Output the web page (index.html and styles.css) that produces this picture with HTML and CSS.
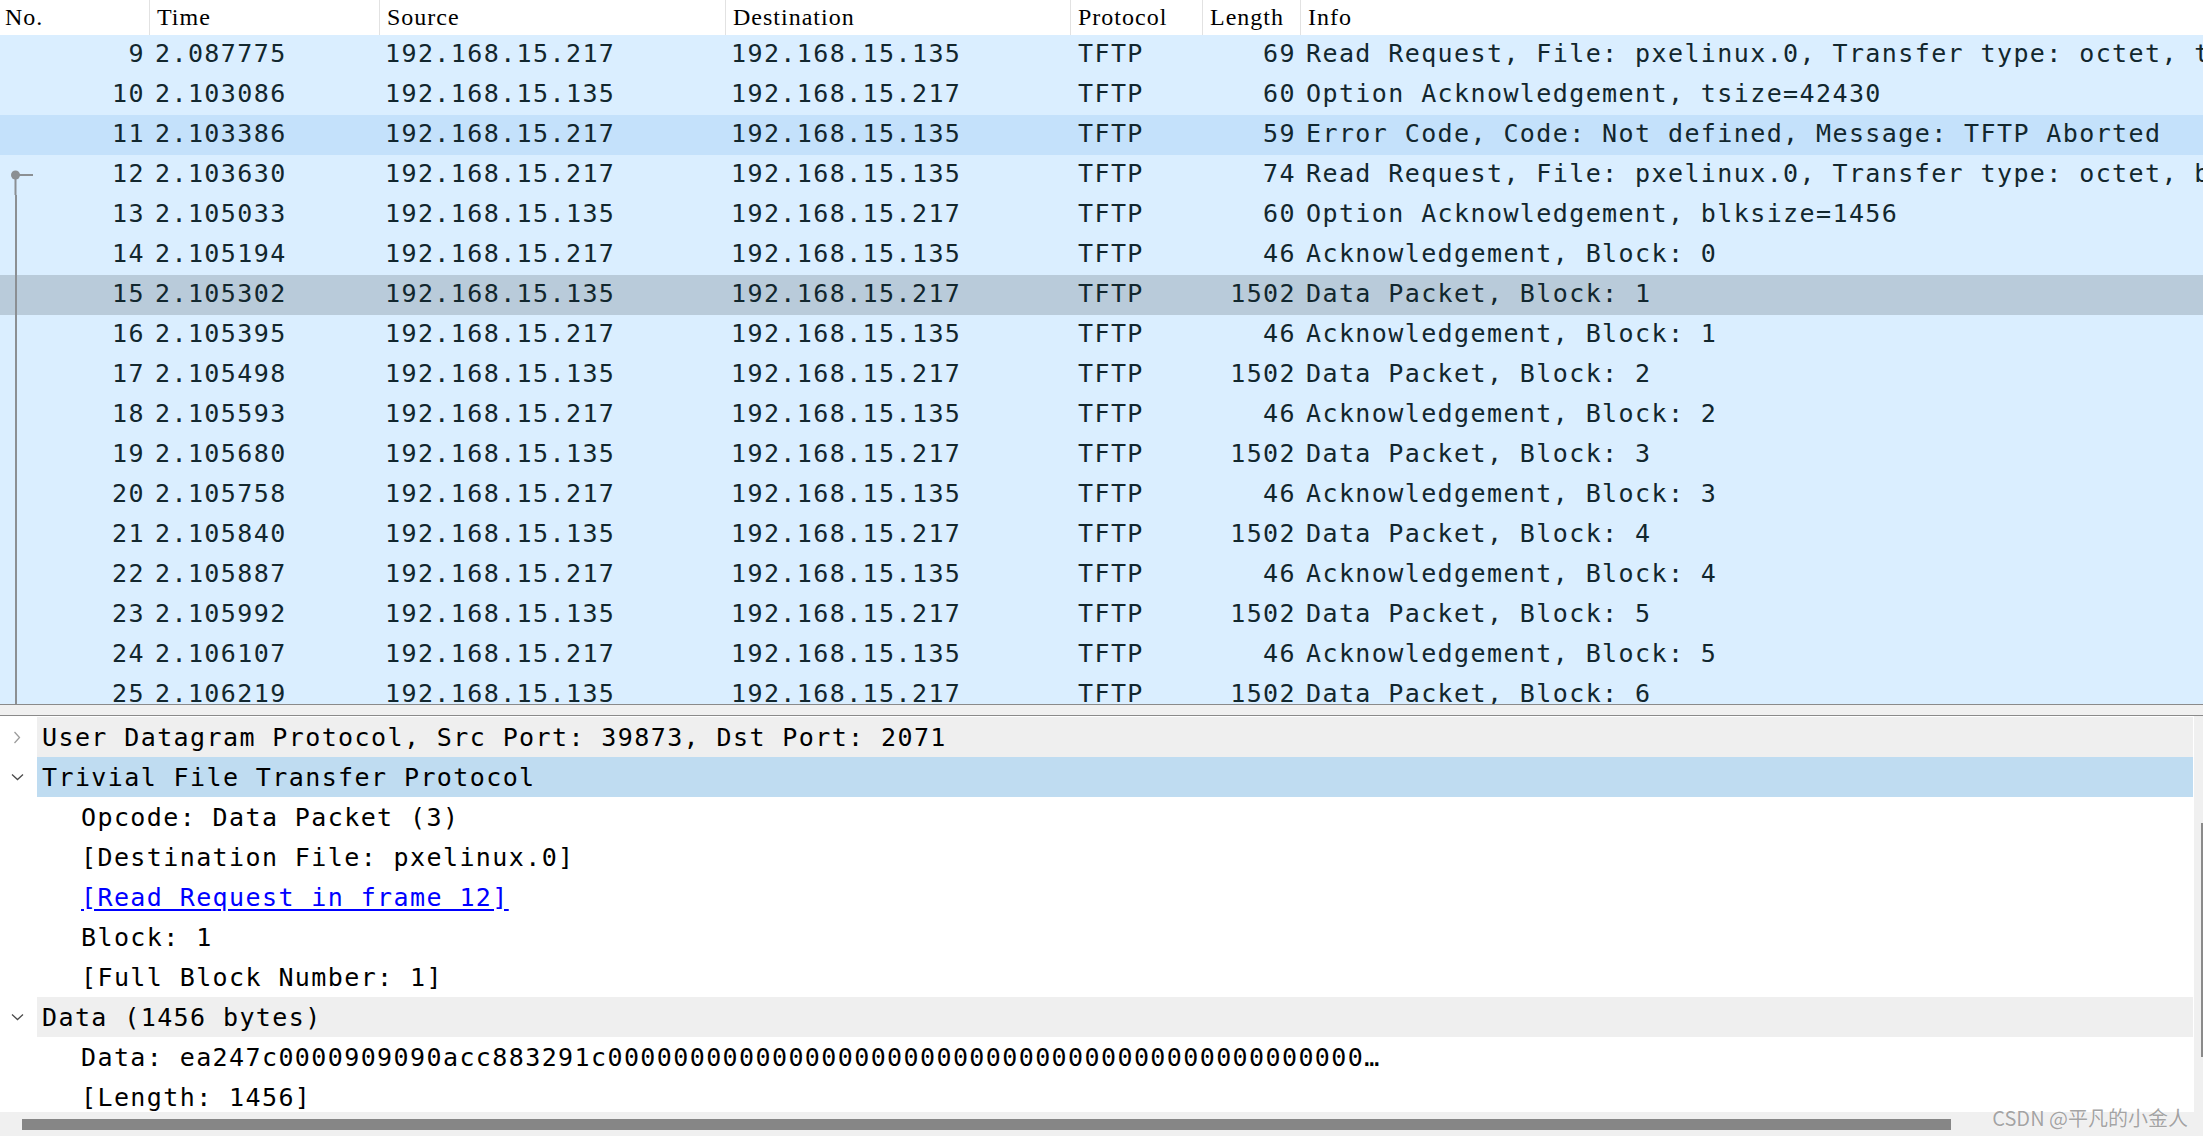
FILE: index.html
```html
<!DOCTYPE html>
<html>
<head>
<meta charset="utf-8">
<title>Wireshark TFTP</title>
<link rel="stylesheet" href="styles.css">
</head>
<body>
<div class="app">
  <div class="plist">
    <div class="phead">
      <div class="hc">No.</div>
      <div class="hc">Time</div>
      <div class="hc">Source</div>
      <div class="hc">Destination</div>
      <div class="hc">Protocol</div>
      <div class="hc">Length</div>
      <div class="hc">Info</div>
    </div>
    <div class="prow"><div class="pc r">9</div><div class="pc">2.087775</div><div class="pc">192.168.15.217</div><div class="pc">192.168.15.135</div><div class="pc p">TFTP</div><div class="pc r">69</div><div class="pc">Read Request, File: pxelinux.0, Transfer type: octet, tsize=0, blksize=1456</div></div>
    <div class="prow"><div class="pc r">10</div><div class="pc">2.103086</div><div class="pc">192.168.15.135</div><div class="pc">192.168.15.217</div><div class="pc p">TFTP</div><div class="pc r">60</div><div class="pc">Option Acknowledgement, tsize=42430</div></div>
    <div class="prow hover"><div class="pc r">11</div><div class="pc">2.103386</div><div class="pc">192.168.15.217</div><div class="pc">192.168.15.135</div><div class="pc p">TFTP</div><div class="pc r">59</div><div class="pc">Error Code, Code: Not defined, Message: TFTP Aborted</div></div>
    <div class="prow"><div class="pc r rel"><svg class="relsvg" width="40" height="40" viewBox="0 0 40 40"><line x1="15.5" y1="20" x2="15.5" y2="40" stroke="#8b8f93" stroke-width="2"/><line x1="15.5" y1="20" x2="33" y2="20" stroke="#8b8f93" stroke-width="2"/><circle cx="15.5" cy="20" r="4.5" fill="#8b8f93"/></svg>12</div><div class="pc">2.103630</div><div class="pc">192.168.15.217</div><div class="pc">192.168.15.135</div><div class="pc p">TFTP</div><div class="pc r">74</div><div class="pc">Read Request, File: pxelinux.0, Transfer type: octet, blksize=1456, tsize=0</div></div>
    <div class="prow"><div class="pc r rel"><span class="vline"></span>13</div><div class="pc">2.105033</div><div class="pc">192.168.15.135</div><div class="pc">192.168.15.217</div><div class="pc p">TFTP</div><div class="pc r">60</div><div class="pc">Option Acknowledgement, blksize=1456</div></div>
    <div class="prow"><div class="pc r rel"><span class="vline"></span>14</div><div class="pc">2.105194</div><div class="pc">192.168.15.217</div><div class="pc">192.168.15.135</div><div class="pc p">TFTP</div><div class="pc r">46</div><div class="pc">Acknowledgement, Block: 0</div></div>
    <div class="prow sel"><div class="pc r rel"><span class="vline"></span>15</div><div class="pc">2.105302</div><div class="pc">192.168.15.135</div><div class="pc">192.168.15.217</div><div class="pc p">TFTP</div><div class="pc r">1502</div><div class="pc">Data Packet, Block: 1</div></div>
    <div class="prow"><div class="pc r rel"><span class="vline"></span>16</div><div class="pc">2.105395</div><div class="pc">192.168.15.217</div><div class="pc">192.168.15.135</div><div class="pc p">TFTP</div><div class="pc r">46</div><div class="pc">Acknowledgement, Block: 1</div></div>
    <div class="prow"><div class="pc r rel"><span class="vline"></span>17</div><div class="pc">2.105498</div><div class="pc">192.168.15.135</div><div class="pc">192.168.15.217</div><div class="pc p">TFTP</div><div class="pc r">1502</div><div class="pc">Data Packet, Block: 2</div></div>
    <div class="prow"><div class="pc r rel"><span class="vline"></span>18</div><div class="pc">2.105593</div><div class="pc">192.168.15.217</div><div class="pc">192.168.15.135</div><div class="pc p">TFTP</div><div class="pc r">46</div><div class="pc">Acknowledgement, Block: 2</div></div>
    <div class="prow"><div class="pc r rel"><span class="vline"></span>19</div><div class="pc">2.105680</div><div class="pc">192.168.15.135</div><div class="pc">192.168.15.217</div><div class="pc p">TFTP</div><div class="pc r">1502</div><div class="pc">Data Packet, Block: 3</div></div>
    <div class="prow"><div class="pc r rel"><span class="vline"></span>20</div><div class="pc">2.105758</div><div class="pc">192.168.15.217</div><div class="pc">192.168.15.135</div><div class="pc p">TFTP</div><div class="pc r">46</div><div class="pc">Acknowledgement, Block: 3</div></div>
    <div class="prow"><div class="pc r rel"><span class="vline"></span>21</div><div class="pc">2.105840</div><div class="pc">192.168.15.135</div><div class="pc">192.168.15.217</div><div class="pc p">TFTP</div><div class="pc r">1502</div><div class="pc">Data Packet, Block: 4</div></div>
    <div class="prow"><div class="pc r rel"><span class="vline"></span>22</div><div class="pc">2.105887</div><div class="pc">192.168.15.217</div><div class="pc">192.168.15.135</div><div class="pc p">TFTP</div><div class="pc r">46</div><div class="pc">Acknowledgement, Block: 4</div></div>
    <div class="prow"><div class="pc r rel"><span class="vline"></span>23</div><div class="pc">2.105992</div><div class="pc">192.168.15.135</div><div class="pc">192.168.15.217</div><div class="pc p">TFTP</div><div class="pc r">1502</div><div class="pc">Data Packet, Block: 5</div></div>
    <div class="prow"><div class="pc r rel"><span class="vline"></span>24</div><div class="pc">2.106107</div><div class="pc">192.168.15.217</div><div class="pc">192.168.15.135</div><div class="pc p">TFTP</div><div class="pc r">46</div><div class="pc">Acknowledgement, Block: 5</div></div>
    <div class="prow"><div class="pc r rel"><span class="vline"></span>25</div><div class="pc">2.106219</div><div class="pc">192.168.15.135</div><div class="pc">192.168.15.217</div><div class="pc p">TFTP</div><div class="pc r">1502</div><div class="pc">Data Packet, Block: 6</div></div>
  </div>

  <div class="split"></div>

  <div class="details">
    <div class="tree">
      <div class="trow"><div class="exp"><svg width="8" height="13" viewBox="0 0 8 13"><polyline points="1.5,1 6.5,6.5 1.5,12" fill="none" stroke="#9c9c9c" stroke-width="1.3"/></svg></div><div class="lbl gray">User Datagram Protocol, Src Port: 39873, Dst Port: 2071</div></div>
      <div class="trow"><div class="exp"><svg width="13" height="8" viewBox="0 0 13 8"><polyline points="1,1.5 6.5,6.5 12,1.5" fill="none" stroke="#4a4a4a" stroke-width="1.3"/></svg></div><div class="lbl sel">Trivial File Transfer Protocol</div></div>
      <div class="trow child"><div class="exp"></div><div class="lbl">Opcode: Data Packet (3)</div></div>
      <div class="trow child"><div class="exp"></div><div class="lbl">[Destination File: pxelinux.0]</div></div>
      <div class="trow child"><div class="exp"></div><div class="lbl"><span class="link">[Read Request in frame 12]</span></div></div>
      <div class="trow child"><div class="exp"></div><div class="lbl">Block: 1</div></div>
      <div class="trow child"><div class="exp"></div><div class="lbl">[Full Block Number: 1]</div></div>
      <div class="trow"><div class="exp"><svg width="13" height="8" viewBox="0 0 13 8"><polyline points="1,1.5 6.5,6.5 12,1.5" fill="none" stroke="#4a4a4a" stroke-width="1.3"/></svg></div><div class="lbl gray">Data (1456 bytes)</div></div>
      <div class="trow child"><div class="exp"></div><div class="lbl">Data: ea247c0000909090acc883291c0000000000000000000000000000000000000000000000…</div></div>
      <div class="trow child"><div class="exp"></div><div class="lbl">[Length: 1456]</div></div>
    </div>
    <div class="vs"><div class="vthumb"></div></div>
  </div>

  <div class="hs"><div class="hthumb"></div></div>

  <div class="watermark">CSDN @平凡的小金人</div>
</div>
</body>
</html>
```

FILE: styles.css
```css
* { box-sizing: border-box; margin: 0; padding: 0; }
html, body { width: 2203px; height: 1136px; overflow: hidden; background: #fff; }
body { font-family: "DejaVu Sans Mono", monospace; }

.app { display: flex; flex-direction: column; height: 1136px; position: relative; }

/* packet list */
.plist { height: 704px; flex: none; overflow: hidden; }
.phead, .prow {
  display: grid;
  grid-template-columns: 149px 230px 346px 345px 132px 98px 1fr;
}
.phead { height: 35px; background: #fff; }
.hc {
  font-family: "Liberation Serif", serif;
  font-size: 24px;
  letter-spacing: 1px;
  color: #000;
  padding-left: 7px;
  border-left: 1px solid #e2e2e2;
  display: flex;
  align-items: center;
  white-space: nowrap;
}
.hc:first-child { border-left: none; padding-left: 5px; }

.prow {
  height: 40px;
  background: #daeeff;
  color: #12272e;
  font-size: 25px;
  letter-spacing: 1.4px;
}
.prow.hover { background: #c4e1fb; }
.prow.sel { background: #b9cbda; }
.pc {
  display: flex;
  align-items: center;
  white-space: nowrap;
  overflow: hidden;
  padding-left: 6px;
  padding-bottom: 3px;
}
.pc.p { padding-left: 8px; }
.pc.r { justify-content: flex-end; padding-left: 0; padding-right: 4px; }
.pc.rel { position: relative; }
.relsvg { position: absolute; left: 0; top: 0; }
.vline { position: absolute; left: 14.5px; top: 0; width: 2px; height: 40px; background: #8b8f93; }

/* splitter */
.split {
  flex: none;
  height: 12px;
  background: #f0f0f0;
  border-top: 1px solid #8a8a8a;
  border-bottom: 1px solid #8a8a8a;
}

/* details */
.details { flex: none; height: 396px; display: flex; background: #fff; }
.tree { flex: 1; padding-top: 1px; overflow: hidden; }
.trow { display: flex; height: 40px; }
.exp { width: 37px; flex: none; display: flex; align-items: center; justify-content: center; padding-right: 3px; }
.lbl {
  flex: 1;
  display: flex;
  align-items: center;
  padding-left: 5px;
  white-space: nowrap;
  overflow: hidden;
  font-size: 25px;
  letter-spacing: 1.4px;
  color: #000;
}
.child .lbl { padding-left: 44px; }
.lbl.gray { background: #efefef; }
.lbl.sel { background: #bfdcf1; }
.link { color: #0000ff; text-decoration: underline; text-underline-offset: 3px; }

.vs {
  width: 9px;
  margin-left: 1px;
  background: #f0f0f0;
  display: flex;
  flex-direction: column;
  align-items: flex-end;
}
.vthumb { width: 2px; height: 234px; margin-top: 107px; background: #8a8a8a; }

/* horizontal scrollbar */
.hs { flex: none; height: 24px; background: #f0f0f0; }
.hthumb { width: 1929px; height: 11px; margin-top: 7px; margin-left: 22px; background: #868686; }

.watermark {
  position: absolute;
  right: 15px;
  bottom: 4px;
  font-family: "Noto Sans CJK SC", sans-serif;
  font-size: 20px;
  color: #a4a4a4;
  text-shadow: 0 0 1px #fff, 0 0 1px #fff;
  white-space: nowrap;
}
```
